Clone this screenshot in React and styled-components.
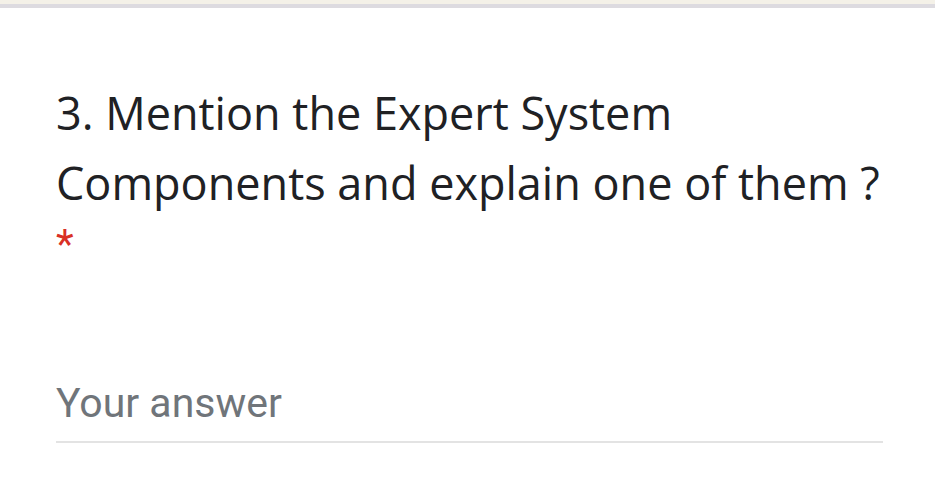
import React from "react";
import styled, { createGlobalStyle } from "styled-components";

const GlobalStyle = createGlobalStyle`
  html, body {
    margin: 0;
    padding: 0;
    background: #ffffff;
  }
`;

const Page = styled.div`
  width: 935px;
  height: 488px;
  display: flex;
  flex-direction: column;
  background: #ffffff;
  overflow: hidden;
`;

const TopEdge = styled.div`
  height: 4px;
  background: #f4f1e8;
`;

const CardBorder = styled.div`
  height: 4px;
  background: #dddbe0;
`;

const Card = styled.div`
  flex: 1;
  display: flex;
  flex-direction: column;
  padding: 70px 52px 0 56px;
`;

const Question = styled.div`
  font-family: "Open Sans", sans-serif;
  font-size: 45px;
  line-height: 70px;
  color: #202124;
  white-space: nowrap;
`;

const Required = styled.div`
  font-family: Roboto, sans-serif;
  color: #d93025;
  font-size: 41px;
  line-height: 44px;
  height: 44px;
  margin-top: 4px;
`;

const AnswerField = styled.div`
  margin-top: 114px;
  border-bottom: 2px solid #e3e3e3;
  padding-bottom: 15px;
`;

const Placeholder = styled.span`
  font-family: Roboto, sans-serif;
  font-size: 41px;
  line-height: 46px;
  color: #70757a;
`;

export default function App() {
  return (
    <Page>
      <GlobalStyle />
      <TopEdge />
      <CardBorder />
      <Card>
        <Question>
          3. Mention the Expert System
          <br />
          Components and explain one of them ?
        </Question>
        <Required>*</Required>
        <AnswerField>
          <Placeholder>Your answer</Placeholder>
        </AnswerField>
      </Card>
    </Page>
  );
}
